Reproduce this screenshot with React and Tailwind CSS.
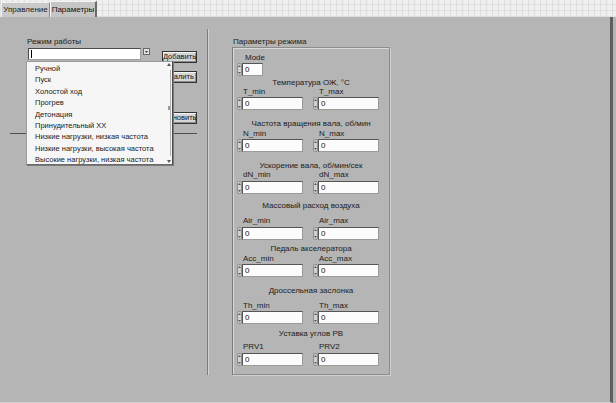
import React from "react";

const groups = [
  { title: "Температура ОЖ, °С", a: "T_min", b: "T_max", ht: "mt-[2px]", lt: "mt-0", it: "mt-[1px]" },
  { title: "Частота вращения вала, об/мин", a: "N_min", b: "N_max", ht: "mt-[9px]", lt: "mt-[1px]", it: "mt-[1px]" },
  { title: "Ускорение вала, об/мин/сек", a: "dN_min", b: "dN_max", ht: "mt-[9px]", lt: "mt-0", it: "mt-[2px]" },
  { title: "Массовый расход воздуха", a: "Air_min", b: "Air_max", ht: "mt-[7px]", lt: "mt-[6px]", it: "mt-[2px]" },
  { title: "Педаль акселератора", a: "Acc_min", b: "Acc_max", ht: "mt-[4px]", lt: "mt-[1px]", it: "mt-[1px]" },
  { title: "Дроссельная заслонка", a: "Th_min", b: "Th_max", ht: "mt-[9px]", lt: "mt-[6px]", it: "mt-[1px]" },
  { title: "Уставка углов РВ", a: "PRV1", b: "PRV2", ht: "mt-[5px]", lt: "mt-[4px]", it: "mt-[2px]" },
];

const modes = [
  "Ручной",
  "Пуск",
  "Холостой ход",
  "Прогрев",
  "Детонация",
  "Принудительный ХХ",
  "Низкие нагрузки, низкая частота",
  "Низкие нагрузки, высокая частота",
  "Высокие нагрузки, низкая частота",
];

// up/down spinner on the left of a numeric control
function Incrementer() {
  return (
    <div className="flex h-[13px] w-[5px] flex-col items-center justify-between rounded-[2px] border border-[#8e8e8e] bg-[#d2d2d2] py-[1px]">
      <svg width="3" height="2" viewBox="0 0 3 2">
        <path d="M0 2 L1.5 0 L3 2 Z" fill="#5a5a5a" />
      </svg>
      <svg width="3" height="2" viewBox="0 0 3 2">
        <path d="M0 0 L1.5 2 L3 0 Z" fill="#5a5a5a" />
      </svg>
    </div>
  );
}

function NumControl({ width }) {
  return (
    <div className="flex">
      <Incrementer />
      <div
        className={`flex h-[13px] items-center border border-[#9a9a9a] border-l-[#555] border-t-[#555] bg-[#fcfcfc] pl-[2px] text-[8px] leading-none text-[#111] ${width}`}
      >
        0
      </div>
    </div>
  );
}

function Btn({ children, className }) {
  return (
    <div
      className={`flex h-[12px] w-[35px] items-center justify-center overflow-hidden border border-[#333] bg-[#d5d5d5] text-[7.5px] leading-none text-[#111] shadow-[inset_1px_1px_0_#f4f4f4,inset_-1px_-1px_0_#8c8c8c] ${className}`}
    >
      {children}
    </div>
  );
}

export default function App() {
  return (
    <div className="flex h-[403px] w-[616px] flex-col overflow-hidden bg-[#b5b5b5] font-['Liberation_Sans',Arial,sans-serif] text-[8px] text-[#1c1c1c]">
      {/* tab strip */}
      <div className="flex h-[17px] shrink-0 items-end bg-[#efefef] bg-[image:repeating-linear-gradient(90deg,#dedede_0_1px,transparent_1px_6px),repeating-linear-gradient(0deg,#dedede_0_1px,transparent_1px_6px)]">
        <div className="ml-[1px] flex h-[15px] w-[49px] items-center justify-center border-l border-t border-r border-l-[#eeeeee] border-t-[#eeeeee] border-r-[#8a8a8a] bg-[#c9c9c9] text-[8px] text-[#222]">
          Управление
        </div>
        <div className="flex h-[16px] w-[47px] items-center justify-center border-l border-t border-r-2 border-l-[#f4f4f4] border-t-[#f4f4f4] border-r-[#6a6a6a] bg-[#c6c6c6] text-[8px] text-[#111]">
          Параметры
        </div>
      </div>

      {/* page body */}
      <div className="mr-[3px] flex flex-1 border-r-[3px] border-b border-r-[#5e5e5e] border-b-[#cfcfcf]">
        {/* operating mode column */}
        <div className="relative flex w-[207px] flex-col pl-[27px] pt-[20px]">
          <span className="h-[9px] leading-[9px]">Режим работы</span>
          <div className="mt-[2px] flex items-start">
            <div className="ml-[1px] flex h-[12px] w-[113px] items-center border border-[#a0a0a0] border-l-[#4a4a4a] border-t-[#4a4a4a] bg-white pl-[2px]">
              <div className="h-[8px] w-px bg-black" />
            </div>
            <div className="ml-[2px] flex h-[7px] w-[7px] items-center justify-center border border-[#6a6a6a] bg-[#e2e2e2]">
              <svg width="3" height="2" viewBox="0 0 3 2">
                <path d="M0 0 L1.5 2 L3 0 Z" fill="#333" />
              </svg>
            </div>
            <Btn className="ml-[12px] mt-[3px]">Добавить</Btn>
          </div>
          <Btn className="ml-[135px] mt-[8px]">Удалить</Btn>
          <Btn className="ml-[135px] mt-[29px]">Обновить</Btn>
          <div className="-ml-[17px] mt-[9px] h-px w-[187px] bg-[#4e4e4e]" />

          {/* open list of the mode combo box */}
          <div className="absolute left-[26px] top-[44px] flex h-[104px] w-[147px] border border-[#9a9a9a] border-r-[#4a4a4a] border-b-[#6a6a6a] bg-[#f6f6f6] shadow-[1px_1px_0_#7a7a7a]">
            <div className="flex flex-1 flex-col pt-[1px] pl-[8px] text-[7.5px]">
              {modes.map((m) => (
                <div key={m} className="h-[11.4px] leading-[11.4px] text-[#1a1a1a]">
                  {m}
                </div>
              ))}
            </div>
            <div className="relative flex w-[6px] flex-col items-center justify-between py-[1px]">
              <svg width="4" height="3" viewBox="0 0 4 3">
                <path d="M0 3 L2 0 L4 3 Z" fill="#555" />
              </svg>
              <div className="absolute right-[1px] top-[8px] bottom-[8px] w-px bg-[#b0b0b0]" />
              <div className="absolute right-[2px] top-[44px] h-[4px] w-[2px] bg-[#9a9a9a]" />
              <svg width="4" height="3" viewBox="0 0 4 3">
                <path d="M0 0 L2 3 L4 0 Z" fill="#555" />
              </svg>
            </div>
          </div>
        </div>

        {/* etched divider */}
        <div className="mt-[12px] h-[346px] w-[2px] border-l border-r border-l-[#7c7c7c] border-r-[#d2d2d2]" />

        {/* mode parameters column */}
        <div className="flex flex-col pl-[23px] pt-[20px]">
          <span className="h-[10px] pl-[1px] leading-[10px]">Параметры режима</span>
          <div className="flex h-[328px] w-[158px] flex-col border border-[#8c8c8c] border-l-[#7a7a7a] pl-[4px] shadow-[inset_1px_1px_0_#d8d8d8,1px_1px_0_#d0d0d0]">
            <span className="ml-[8px] mt-[5px] h-[9px] leading-[9px]">Mode</span>
            <div className="mt-[1px]">
              <NumControl width="w-[21px]" />
            </div>
            {groups.map((g) => (
              <React.Fragment key={g.title}>
                <div className={`-ml-[4px] h-[9px] text-center leading-[9px] ${g.ht}`}>{g.title}</div>
                <div className={`flex h-[9px] leading-[9px] ${g.lt}`}>
                  <span className="ml-[6px] w-[76px]">{g.a}</span>
                  <span>{g.b}</span>
                </div>
                <div className={`flex ${g.it}`}>
                  <NumControl width="w-[61px]" />
                  <div className="ml-[10px]">
                    <NumControl width="w-[61px]" />
                  </div>
                </div>
              </React.Fragment>
            ))}
          </div>
        </div>
      </div>
    </div>
  );
}
